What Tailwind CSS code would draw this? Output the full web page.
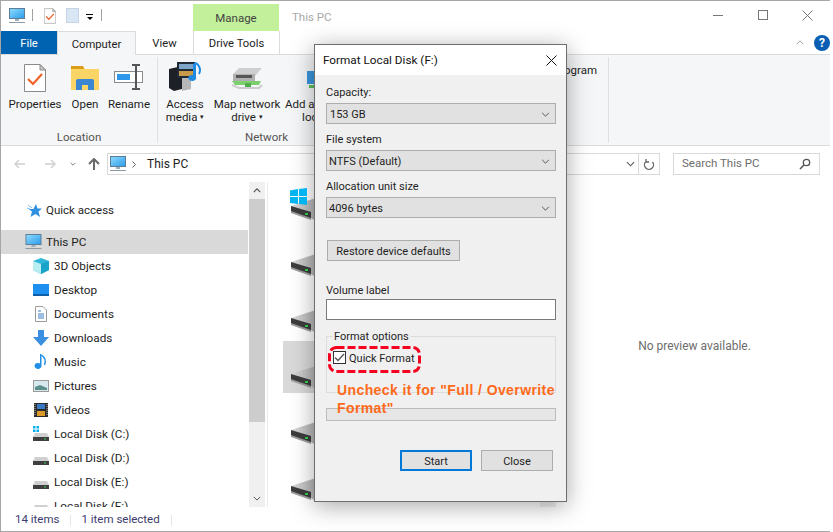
<!DOCTYPE html>
<html>
  <head>
    <meta charset="UTF-8" />
    <script src="https://cdn.jsdelivr.net/npm/@tailwindcss/browser@4"></script>
  </head>
  <body class="bg-white">
    <svg width="0" height="0" class="absolute">
      <defs>
        <linearGradient id="topg" x1="0" x2="1" y1="0" y2="0">
          <stop offset="0" stop-color="#d8d8d8" />
          <stop offset="1" stop-color="#a9a9a9" />
        </linearGradient>
        <linearGradient id="screen" x1="0" x2="1" y1="0" y2="1">
          <stop offset="0" stop-color="#8fdcff" />
          <stop offset="1" stop-color="#2b9bea" />
        </linearGradient>
        <symbol id="pc" viewBox="0 0 16 16">
          <rect x="0.5" y="0.5" width="15" height="10" fill="url(#screen)" stroke="#5b7f99" />
          <rect x="6" y="11" width="4" height="2" fill="#9fb0bd" />
          <rect x="0" y="14" width="16" height="1" fill="#8a9aa6" />
        </symbol>
        <symbol id="bigdrive" viewBox="0 0 32 24">
          <path d="M1 9 L26 1 L32 2 L32 24 L24 23 Z" fill="url(#topg)" />
          <path d="M1 9 L21 15 L21 22 L1 15 Z" fill="#3c3c3c" />
          <path d="M1 14 L21 21 L21 23 L1 16 Z" fill="#9a9a9a" />
          <rect x="15" y="16" width="3" height="2" fill="#35d04f" />
        </symbol>
        <symbol id="smalldrive" viewBox="0 0 16 16">
          <path d="M2 7 L14 7 L16 11 L0 11 Z" fill="#d0d0d0" />
          <rect x="0" y="11" width="16" height="4" fill="#3f3f3f" />
          <rect x="11" y="12.500" width="2" height="1" fill="#35d04f" />
        </symbol>
        <symbol id="chev" viewBox="0 0 10 6">
          <path d="M1 1 L5 5 L9 1" fill="none" stroke="#555" stroke-width="1.200" />
        </symbol>
        <symbol id="checkdoc" viewBox="0 0 22 28">
          <path d="M0.500 0.500 H16 L21.500 6 V27.500 H0.500 Z" fill="#fff" stroke="#8a8a8a" />
          <path d="M16 0.500 V6 H21.500 Z" fill="#c9c9c9" stroke="#8a8a8a" />
          <path d="M4 15 L9 20 L18 10" fill="none" stroke="#f0622b" stroke-width="2.200" />
        </symbol>
      </defs>
    </svg>

    <div class="relative w-[833px] h-[532px] overflow-hidden bg-white text-[11.5px] leading-none text-[#1e1e1e] font-['Roboto',sans-serif]">
      <div class="w-[830px] h-[532px] border-t border-l border-b border-[#a6a6a6] flex flex-col">
        <!-- title bar -->
        <div class="h-[30px] flex shrink-0">
          <div class="flex items-start pt-[7px] pl-[8px] w-[192px]">
            <svg class="w-[16px] h-[16px]"><use href="#pc" /></svg>
            <div class="ml-[7px] mt-[1px] w-px h-[12px] bg-[#a0a0a0]"></div>
            <svg class="ml-[11px] w-[12px] h-[16px]"><use href="#checkdoc" /></svg>
            <div class="ml-[10px] w-[13px] h-[15px] bg-[#dbe6f4] border border-[#c5d3e6]"></div>
            <div class="ml-[7px] mt-[6px] flex flex-col items-center gap-[2px]">
              <div class="w-[7px] h-px bg-black"></div>
              <div class="w-0 h-0 border-x-[3px] border-t-[3px] border-x-transparent border-t-black"></div>
            </div>
            <div class="ml-[8px] mt-[1px] w-px h-[12px] bg-[#a0a0a0]"></div>
          </div>
          <div class="mt-[3px] pt-[2px] w-[86px] bg-[#c3f09a] flex items-center justify-center text-[#444]">Manage</div>
          <div class="ml-[13px] pt-[11px] text-[#a8a8a8]">This PC</div>
          <div class="ml-auto pb-[2px] flex">
            <div class="w-[45px] flex items-center justify-center"><div class="w-[10px] h-px bg-[#777]"></div></div>
            <div class="w-[45px] flex items-center justify-center"><div class="w-[10px] h-[10px] border border-[#777]"></div></div>
            <div class="w-[45px] flex items-center justify-center">
              <svg width="11" height="11" viewBox="0 0 11 11"><path d="M0.500 0.500 L10.500 10.500 M10.500 0.500 L0.500 10.500" stroke="#777" /></svg>
            </div>
          </div>
        </div>

        <!-- tabs -->
        <div class="h-[23px] flex items-stretch shrink-0 relative text-[11.25px]">
          <div class="w-[56px] pt-[2px] bg-[#0063b1] text-white flex items-center justify-center">File</div>
          <div class="w-[79px] h-[24px] pt-[2px] bg-[#f5f6f7] border-x border-t border-[#dadbdc] flex items-center justify-center z-10">Computer</div>
          <div class="w-[57px] pt-[2px] flex items-center justify-center">View</div>
          <div class="w-[87px] pt-[2px] border-x border-[#dadbdc] flex items-center justify-center">Drive Tools</div>
          <div class="ml-auto flex items-center gap-[10px]">
            <svg class="w-[8px] h-[5px]" viewBox="0 0 10 6"><path d="M1 5 L5 1 L9 5" fill="none" stroke="#888" /></svg>
            <div class="w-[16px] h-[16px] rounded-full bg-[#0a5fb4] text-white text-[12px] font-bold flex items-center justify-center">?</div>
          </div>
        </div>

        <!-- ribbon -->
        <div class="h-[92px] bg-[#f5f6f7] border-y border-[#dadbdc] shrink-0 flex pt-[2px] pb-[2px]">
          <div class="w-[157px] border-r border-[#dfe0e1] flex flex-col">
            <div class="flex pl-[8px] pt-[7px] gap-[9px]">
              <div class="flex flex-col items-center w-[52px]">
                <svg class="w-[22px] h-[28px]"><use href="#checkdoc" /></svg>
                <div class="mt-[7px]">Properties</div>
              </div>
              <div class="flex flex-col items-center w-[30px]">
                <svg class="w-[28px] h-[28px]" viewBox="0 0 28 28">
                  <path d="M0 2 H12 L14 5 H28 V26 H0 Z" fill="#fbd466" />
                  <path d="M0 2 H12 L13 5 H0 Z" fill="#dc9c17" />
                  <path d="M5 26 V17 Q5 15 7 15 H21 Q23 15 23 17 V26 H17 V21 H11 V26 Z" fill="#3a86d3" />
                </svg>
                <div class="mt-[7px]">Open</div>
              </div>
              <div class="flex flex-col items-center w-[40px]">
                <svg class="w-[30px] h-[28px]" viewBox="0 0 30 28">
                  <rect x="0.500" y="7.500" width="28" height="11" fill="#fff" stroke="#8a8a8a" />
                  <rect x="3" y="10" width="13" height="6" fill="#2f97ea" />
                  <path d="M18 1 H26 M22 1 V25 M18 25 H26" stroke="#555" stroke-width="2" fill="none" />
                </svg>
                <div class="mt-[7px]">Rename</div>
              </div>
            </div>
            <div class="mt-auto text-center text-[#555]">Location</div>
          </div>
          <div class="w-[451px] border-r border-[#dfe0e1] flex flex-col">
            <div class="flex pt-[4px]">
              <div class="ml-[1px] w-[52px] flex flex-col items-center">
                <svg class="w-[34px] h-[31px]" viewBox="0 0 34 31">
                  <path d="M1 8 L14 5 V28 L6 30 L1 27 Z" fill="#1d2127" />
                  <path d="M14 5 L23 8 V28 L14 30 Z" fill="#b8b8b8" />
                  <rect x="9" y="1" width="18" height="16" fill="#1f2a35" />
                  <rect x="11" y="3" width="14" height="5" fill="#7fa4c9" />
                  <rect x="11" y="10" width="14" height="5" fill="#c99a4a" />
                  <path d="M28 1 V16 A4 3 0 1 1 25 14 V3 Z" fill="#1f8ae0" />
                  <path d="M28 2 Q34 7 31 13" fill="none" stroke="#1f8ae0" stroke-width="2" />
                </svg>
                <div class="mt-[6px] leading-[13px] text-center whitespace-nowrap">Access<br />media <span class="text-[7px] align-middle">▾</span></div>
              </div>
              <div class="w-[72px] flex flex-col items-center">
                <svg class="w-[32px] h-[31px]" viewBox="0 0 32 31">
                  <path d="M2 13 L8 7 H31 L24 15 H2 Z" fill="#cfcfcf" />
                  <path d="M2 13 H24 V20 H2 Z" fill="#b0b0b0" />
                  <rect x="5" y="14" width="16" height="3" fill="#555" />
                  <path d="M1 20 H30 L28 24 H4 Z" fill="#7bcf6d" />
                  <rect x="14" y="22" width="6" height="6" fill="#4fae4a" />
                  <path d="M1 24 L8 27 H28 L31 24" fill="none" stroke="#ccc" stroke-width="2" />
                </svg>
                <div class="mt-[6px] leading-[13px] text-center whitespace-nowrap">Map network<br />drive <span class="text-[7px] align-middle">▾</span></div>
              </div>
              <div class="ml-[2px] w-[60px] leading-[13px] pt-[37px] whitespace-nowrap relative">
                <svg class="absolute left-[22px] top-[10px] w-[16px] h-[18px]" viewBox="0 0 16 18"><rect x="0" y="0" width="16" height="13" fill="#3a97e0" /><rect x="2" y="14" width="14" height="3" fill="#5cc05c" /></svg>
                Add a<br />&nbsp;&nbsp;&nbsp;&nbsp;&nbsp;&nbsp;loc
              </div>
              <div class="ml-[219px] pt-[4px] whitespace-nowrap">ogram</div>
            </div>
            <div class="mt-auto pl-[87px] text-[#555]">Network</div>
          </div>
        </div>

        <!-- address -->
        <div class="h-[36px] flex items-center shrink-0 pl-[13px]">
          <svg class="w-[12px] h-[10px]" viewBox="0 0 12 10"><path d="M11 5 H1 M5 1 L1 5 L5 9" fill="none" stroke="#d0d0d0" stroke-width="1.500" /></svg>
          <svg class="ml-[18px] w-[12px] h-[10px]" viewBox="0 0 12 10"><path d="M1 5 H11 M7 1 L11 5 L7 9" fill="none" stroke="#d0d0d0" stroke-width="1.500" /></svg>
          <svg class="ml-[14px] w-[6px] h-[4px]"><use href="#chev" /></svg>
          <svg class="ml-[12px] w-[12px] h-[13px]" viewBox="0 0 12 13"><path d="M6 12 V2 M1 6 L6 1 L11 6" fill="none" stroke="#6a6a6a" stroke-width="2" /></svg>
          <div class="ml-[7px] w-[553px] h-[22px] border border-[#d9d9d9] flex items-center pl-[2px]">
            <svg class="w-[16px] h-[16px]"><use href="#pc" /></svg>
            <svg class="ml-[6px] w-[4px] h-[7px]" viewBox="0 0 4 7"><path d="M0.500 0.500 L3.500 3.500 L0.500 6.500" fill="none" stroke="#666" /></svg>
            <span class="ml-[11px] text-[12px]">This PC</span>
            <div class="ml-auto flex items-center h-full">
              <svg class="w-[9px] h-[6px]"><use href="#chev" /></svg>
              <div class="ml-[3px] w-px h-full bg-[#d9d9d9]"></div>
              <svg class="mx-[4px] w-[12px] h-[13px]" viewBox="0 0 12 13"><path d="M9.500 4 A4.500 4.500 0 1 1 3 3.500 M3 1 V4 H6" fill="none" stroke="#666" stroke-width="1.300" /></svg>
            </div>
          </div>
          <div class="ml-[13px] w-[147px] h-[22px] border border-[#d9d9d9] flex items-center pl-[8px] pr-[8px] text-[#6d6d6d]">
            Search This PC
            <svg class="ml-auto w-[12px] h-[12px]" viewBox="0 0 12 12"><circle cx="7.500" cy="4.500" r="3.200" fill="none" stroke="#555" stroke-width="1.300" /><path d="M5 7 L1 11" stroke="#555" stroke-width="1.600" /></svg>
          </div>
        </div>

        <!-- main -->
        <div class="flex h-[325px] shrink-0">
          <!-- nav pane -->
          <div class="w-[247px] overflow-hidden pt-[16px] text-[11.75px]">
            <div class="h-[24px] flex items-center pl-[26px]">
              <svg class="w-[15px] h-[15px]" viewBox="0 0 15 15"><path d="M9 1 L10.500 5.500 H15 L11.500 8.500 L13 14 L8.500 11 L3.500 14 L5 8.500 L1.500 6 H6.500 Z" fill="#2f8fe0" /><path d="M1 2 L5 5 M0 5 L3 6" stroke="#7fc0f0" /></svg>
              <span class="ml-[4px] pt-px text-[11.5px]">Quick access</span>
            </div>
            <div class="mt-[8px] h-[24px] bg-[#d9d9d9] flex items-center pl-[24px]">
              <svg class="w-[17px] h-[16px]"><use href="#pc" /></svg>
              <span class="ml-[4px] pt-px">This PC</span>
            </div>
            <div class="h-[24px] flex items-center pl-[32px]">
              <svg class="w-[16px] h-[16px]" viewBox="0 0 16 16"><path d="M8 0 L16 3 V12 L8 16 L0 12 V3 Z" fill="#2fb6d8" /><path d="M0 3 L8 6 V16 L0 12 Z" fill="#b8eef2" /><path d="M8 6 L16 3 V12 L8 16 Z" fill="#18a3c9" /></svg>
              <span class="ml-[5px] pt-px">3D Objects</span>
            </div>
            <div class="h-[24px] flex items-center pl-[32px]">
              <svg class="w-[16px] h-[16px]" viewBox="0 0 16 16"><rect x="0" y="2" width="16" height="11" fill="#1e90f0" /><rect x="0" y="12" width="16" height="2" fill="#0f5fa8" /></svg>
              <span class="ml-[5px] pt-px">Desktop</span>
            </div>
            <div class="h-[24px] flex items-center pl-[32px]">
              <svg class="w-[16px] h-[16px]" viewBox="0 0 16 16"><path d="M2.500 0.500 H10 L13.500 4 V15.500 H2.500 Z" fill="#fff" stroke="#9a9a9a" /><path d="M5 5 H8 M5 8 H11 M5 10 H11 M5 12 H11" stroke="#3a7fc4" /></svg>
              <span class="ml-[5px] pt-px">Documents</span>
            </div>
            <div class="h-[24px] flex items-center pl-[32px]">
              <svg class="w-[16px] h-[16px]" viewBox="0 0 16 16"><path d="M5 0 H11 V7 H16 L8 16 L0 7 H5 Z" fill="#3a8fe0" /></svg>
              <span class="ml-[5px] pt-px">Downloads</span>
            </div>
            <div class="h-[24px] flex items-center pl-[32px]">
              <svg class="w-[16px] h-[16px]" viewBox="0 0 16 16"><path d="M7 0 L8.500 0 V12 A3.500 3 0 1 1 7 9.500 Z" fill="#1f8fe8" /><path d="M8.500 1 Q14 5 11.500 11" fill="none" stroke="#1f8fe8" stroke-width="1.500" /></svg>
              <span class="ml-[5px] pt-px">Music</span>
            </div>
            <div class="h-[24px] flex items-center pl-[32px]">
              <svg class="w-[16px] h-[16px]" viewBox="0 0 16 16"><rect x="0.500" y="2.500" width="15" height="11" fill="#d7e8ef" stroke="#9a9a9a" /><path d="M2 9 L7 7 L14 10 V12 H2 Z" fill="#5a8f8a" /></svg>
              <span class="ml-[5px] pt-px">Pictures</span>
            </div>
            <div class="h-[24px] flex items-center pl-[32px]">
              <svg class="w-[16px] h-[16px]" viewBox="0 0 16 16"><rect x="1" y="1" width="14" height="14" fill="#2b2b2b" /><rect x="4" y="2" width="8" height="5" fill="#3b78c2" /><rect x="4" y="9" width="8" height="5" fill="#d99b2a" /><path d="M2 2 V14 M14 2 V14" stroke="#bbb" stroke-dasharray="1 1" /></svg>
              <span class="ml-[5px] pt-px">Videos</span>
            </div>
            <div class="h-[24px] flex items-center pl-[32px]">
              <div class="relative w-[16px] h-[16px]">
                <svg class="w-[16px] h-[16px]"><use href="#smalldrive" /></svg>
                <svg class="absolute left-0 top-0 w-[6px] h-[6px]" viewBox="0 0 6 6"><path d="M0 0 H2.500 V2.500 H0 Z M3.500 0 H6 V2.500 H3.500 Z M0 3.500 H2.500 V6 H0 Z M3.500 3.500 H6 V6 H3.500 Z" fill="#00adef" /></svg>
              </div>
              <span class="ml-[5px] pt-px">Local Disk (C:)</span>
            </div>
            <div class="h-[24px] flex items-center pl-[32px]">
              <svg class="w-[16px] h-[16px]"><use href="#smalldrive" /></svg>
              <span class="ml-[5px] pt-px">Local Disk (D:)</span>
            </div>
            <div class="h-[24px] flex items-center pl-[32px]">
              <svg class="w-[16px] h-[16px]"><use href="#smalldrive" /></svg>
              <span class="ml-[5px] pt-px">Local Disk (E:)</span>
            </div>
            <div class="h-[24px] flex items-center pl-[32px]">
              <svg class="w-[16px] h-[16px]"><use href="#smalldrive" /></svg>
              <span class="ml-[5px] pt-px">Local Disk (F:)</span>
            </div>
          </div>

          <!-- nav scrollbar -->
          <div class="w-[16px] ml-px bg-[#f0f0f0] flex flex-col shrink-0">
            <div class="h-[17px] flex items-center justify-center">
              <svg class="w-[8px] h-[5px]" viewBox="0 0 10 6"><path d="M1 5 L5 1 L9 5" fill="none" stroke="#555" stroke-width="1.500" /></svg>
            </div>
            <div class="h-[223px] bg-[#cdcdcd]"></div>
            <div class="mt-auto h-[17px] flex items-center justify-center">
              <svg class="w-[8px] h-[5px]"><use href="#chev" /></svg>
            </div>
          </div>
          <div class="w-px ml-[2px] bg-[#ebebeb] shrink-0"></div>

          <!-- drive list -->
          <div class="ml-[15px] w-[273px] shrink-0 overflow-hidden relative">
            <div class="absolute left-[7px] top-[6px] w-[17px] h-[17px] z-10">
              <svg class="w-[17px] h-[17px]" viewBox="0 0 17 17"><path d="M0 2.500 L8 1 V8 H0 Z M9 1 L17 0 V8 H9 Z M0 9 H8 V16 L0 15 Z M9 9 H17 V17 L9 16 Z" fill="#00b4f0" /></svg>
            </div>
            <div class="h-[47px] pl-[7px] pt-[15px]"><svg class="w-[32px] h-[24px]"><use href="#bigdrive" /></svg></div>
            <div class="h-[56px] pl-[7px] pt-[24px]"><svg class="w-[32px] h-[24px]"><use href="#bigdrive" /></svg></div>
            <div class="h-[56px] pl-[7px] pt-[24px]"><svg class="w-[32px] h-[24px]"><use href="#bigdrive" /></svg></div>
            <div class="h-[52px] mb-[4px] w-[40px] pl-[7px] pt-[24px] bg-[#d9d9d9]"><svg class="w-[32px] h-[24px]"><use href="#bigdrive" /></svg></div>
            <div class="h-[56px] pl-[7px] pt-[24px]"><svg class="w-[32px] h-[24px]"><use href="#bigdrive" /></svg></div>
            <div class="h-[56px] pl-[7px] pt-[24px]"><svg class="w-[32px] h-[24px]"><use href="#bigdrive" /></svg></div>
            <div class="absolute right-0 bottom-0 w-[16px] h-[17px] bg-[#f0f0f0] flex items-center justify-center">
              <svg class="w-[8px] h-[5px]"><use href="#chev" /></svg>
            </div>
          </div>

          <!-- preview pane -->
          <div class="flex-1 flex items-center justify-center pt-[2px] pl-[3px] text-[#6d6d6d] text-[12px]">No preview available.</div>
        </div>

        <!-- status -->
        <div class="flex-1 flex items-center text-[#3c3c6e] pl-[14px] pt-[2px]">
          <span>14 items</span>
          <div class="ml-[11px] w-px h-[11px] bg-[#e5e5e5]"></div>
          <span class="ml-[10px]">1 item selected</span>
          <div class="ml-[11px] w-px h-[11px] bg-[#e5e5e5]"></div>
        </div>
      </div>

      <!-- format dialog -->
      <div class="absolute left-[314px] top-[44px] w-[253px] h-[458px] bg-[#f0f0f0] border border-[#6e6e6e] shadow-[0_4px_22px_rgba(0,0,0,0.35)] flex flex-col text-[11px]">
        <div class="h-[30px] pt-[2px] bg-white flex items-center pl-[8px] shrink-0 relative text-[#111] text-[11.75px]">
          Format Local Disk (F:)
          <svg class="absolute right-[9px] top-[10px] w-[11px] h-[11px]" viewBox="0 0 11 11"><path d="M0.500 0.500 L10.500 10.500 M10.500 0.500 L0.500 10.500" stroke="#111" /></svg>
        </div>
        <div class="pl-[11px] pr-[10px] relative flex-1">
          <div class="mt-[10px] h-[14px] flex items-center">Capacity:</div>
          <div class="mt-[4px] h-[21px] pt-[2px] bg-[#e1e1e1] border border-[#adadad] flex items-center pl-[3px] pr-[5px] justify-between">153 GB<svg class="w-[9px] h-[5px]"><use href="#chev" /></svg></div>
          <div class="mt-[8px] h-[14px] flex items-center">File system</div>
          <div class="mt-[4px] h-[21px] pt-[2px] bg-[#e1e1e1] border border-[#adadad] flex items-center pl-[2px] pr-[5px] justify-between">NTFS (Default)<svg class="w-[9px] h-[5px]"><use href="#chev" /></svg></div>
          <div class="mt-[8px] h-[14px] flex items-center">Allocation unit size</div>
          <div class="mt-[4px] h-[21px] pt-[2px] bg-[#e1e1e1] border border-[#adadad] flex items-center pl-[2px] pr-[5px] justify-between">4096 bytes<svg class="w-[9px] h-[5px]"><use href="#chev" /></svg></div>
          <div class="mt-[22px] ml-px w-[133px] h-[21px] pt-[2px] bg-[#e1e1e1] border border-[#adadad] flex items-center justify-center">Restore device defaults</div>
          <div class="mt-[22px] h-[14px] flex items-center">Volume label</div>
          <div class="mt-[2px] h-[21px] bg-white border border-[#7a7a7a]"></div>
          <fieldset class="mt-[10px] h-[63px] border border-[#dcdcdc] pl-[6px] relative">
            <legend class="px-[1px] h-[12px] leading-[14px]">Format options</legend>
            <div class="mt-[9px] flex items-center">
              <div class="w-[13px] h-[13px] border border-[#333] bg-white flex items-center justify-center">
                <svg class="w-[11px] h-[9px]" viewBox="0 0 11 9"><path d="M1 4.500 L4 7.500 L10 1" fill="none" stroke="#555" stroke-width="1.300" /></svg>
              </div>
              <span class="ml-[3px] pt-[2px]">Quick Format</span>
            </div>
          </fieldset>
          <div class="mt-[15px] h-[13px] bg-[#e6e6e6] border border-[#bcbcbc]"></div>
          <div class="mt-[29px] flex justify-end pr-[3px] gap-[9px]">
            <div class="w-[72px] h-[21px] pt-[2px] bg-[#e1e1e1] border-2 border-[#0078d7] flex items-center justify-center">Start</div>
            <div class="w-[72px] h-[21px] pt-[2px] bg-[#e1e1e1] border border-[#adadad] flex items-center justify-center">Close</div>
          </div>
          <!-- annotation -->
          <svg class="absolute left-[13px] top-[271px] w-[93px] h-[27px]" viewBox="0 0 93 27"><rect x="1.500" y="1.500" width="90" height="24" rx="7" fill="none" stroke="#f5001e" stroke-width="3" stroke-dasharray="8 3" /></svg>
          <div class="absolute left-[22px] top-[306px] w-[225px] text-[14px] leading-[18px] font-bold tracking-[0.4px] text-[#ff6a1a] font-['Liberation_Sans',sans-serif]">Uncheck it for "Full / Overwrite Format"</div>
        </div>
      </div>
    </div>
  </body>
</html>
